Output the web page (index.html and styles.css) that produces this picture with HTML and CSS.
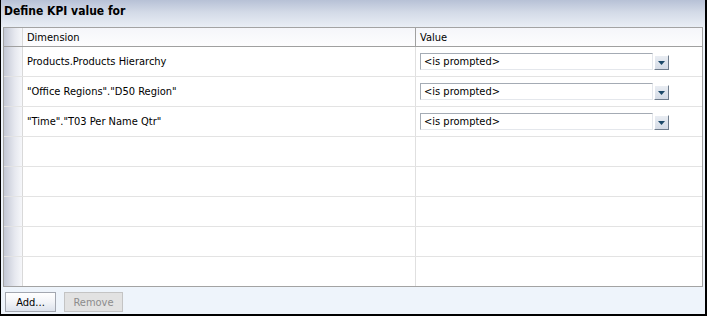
FILE: index.html
```html
<!DOCTYPE html>
<html lang="en">
<head>
    <meta charset="UTF-8">
    <title>Define KPI value for</title>
    <link rel="stylesheet" href="styles.css">
</head>
<body>
    <div class="dialog">
        <div class="title">Define KPI value for</div>

        <div class="grid">
            <div class="row head">
                <div class="rowhead"></div>
                <div class="cell dim">Dimension</div>
                <div class="cell val">Value</div>
            </div>

            <div class="row">
                <div class="rowhead"></div>
                <div class="cell dim">Products.Products Hierarchy</div>
                <div class="cell val">
                    <div class="select">
                        <span class="field">&lt;is prompted&gt;</span>
                        <span class="drop"><svg width="7" height="4" viewBox="0 0 7 4"><path d="M0 0H7L3.5 4Z" fill="#1b4868"/></svg></span>
                    </div>
                </div>
            </div>

            <div class="row">
                <div class="rowhead"></div>
                <div class="cell dim">"Office Regions"."D50 Region"</div>
                <div class="cell val">
                    <div class="select">
                        <span class="field">&lt;is prompted&gt;</span>
                        <span class="drop"><svg width="7" height="4" viewBox="0 0 7 4"><path d="M0 0H7L3.5 4Z" fill="#1b4868"/></svg></span>
                    </div>
                </div>
            </div>

            <div class="row">
                <div class="rowhead"></div>
                <div class="cell dim">"Time"."T03 Per Name Qtr"</div>
                <div class="cell val">
                    <div class="select">
                        <span class="field">&lt;is prompted&gt;</span>
                        <span class="drop"><svg width="7" height="4" viewBox="0 0 7 4"><path d="M0 0H7L3.5 4Z" fill="#1b4868"/></svg></span>
                    </div>
                </div>
            </div>

            <div class="row"><div class="rowhead"></div><div class="cell dim"></div><div class="cell val"></div></div>
            <div class="row"><div class="rowhead"></div><div class="cell dim"></div><div class="cell val"></div></div>
            <div class="row"><div class="rowhead"></div><div class="cell dim"></div><div class="cell val"></div></div>
            <div class="row"><div class="rowhead"></div><div class="cell dim"></div><div class="cell val"></div></div>
            <div class="row last"><div class="rowhead"></div><div class="cell dim"></div><div class="cell val"></div></div>
        </div>

        <div class="actions">
            <button class="btn add">Add...</button>
            <button class="btn remove" disabled>Remove</button>
        </div>
    </div>
</body>
</html>
```

FILE: styles.css
```css
/* Página */
body {
    margin: 0;
    font-family: "DejaVu Sans Condensed", "Liberation Sans", sans-serif;
    font-size: 11px;
    color: #000;
    background-color: #fff;
}

/* Marco del diálogo */
.dialog {
    width: 707px;
    height: 316px;
    box-sizing: border-box;
    border-left: 1px solid #000;
    border-right: 2px solid #000;
    border-bottom: 2px solid #000;
    background-color: #eef4fb;
    display: flex;
    flex-direction: column;
}

/* Barra de título */
.title {
    height: 27px;
    box-sizing: border-box;
    padding: 3px 0 0 3px;
    line-height: 16px;
    font-size: 12px;
    font-weight: bold;
    background: linear-gradient(to bottom, #b7c1d6, #d3dae7 45%, #e9eef5);
}

/* Tabla */
.grid {
    margin: 0 2px 0 2px;
    border: 1px solid #a3a3a3;
    background-color: #fff;
}

.row {
    display: grid;
    grid-template-columns: 19px 393px 1fr;
    height: 30px;
    border-bottom: 1px solid #e3e3e3;
    box-sizing: border-box;
}

.row.last {
    border-bottom: none;
    height: 29px;
}

.row.head {
    height: 19px;
    border-bottom: 1px solid #a0a0a0;
    background: linear-gradient(to bottom, #f5f6fa, #fdfdfe);
}

.rowhead {
    border-right: 1px solid #d9d9d9;
    background: linear-gradient(to right, #c3c8d5, #e6e8ef 60%, #f6f7fa);
}

.cell {
    display: flex;
    align-items: center;
    padding-left: 4px;
    white-space: nowrap;
    overflow: hidden;
}

.cell.dim {
    border-right: 1px solid #e0e0e0;
}

.row.head .cell.dim {
    border-right-color: #a0a0a0;
}

/* Lista desplegable */
.select {
    display: flex;
    align-items: flex-end;
}

.field {
    width: 233px;
    height: 17px;
    box-sizing: border-box;
    padding-left: 3px;
    line-height: 15px;
    border: 1px solid #a4abb4;
    border-right-color: #e4e7ec;
    border-bottom-color: #e4e7ec;
    background-color: #fff;
}

.drop {
    width: 15px;
    height: 15px;
    box-sizing: border-box;
    margin-left: 1px;
    display: flex;
    align-items: center;
    justify-content: center;
    padding-top: 1px;
    border: 1px solid #fff;
    border-right-color: #6f7c8c;
    border-bottom-color: #6f7c8c;
    background: linear-gradient(to bottom, #e9edf3, #d4dbe6);
}

/* Botones inferiores */
.actions {
    display: flex;
    gap: 8px;
    padding: 5px 0 0 4px;
}

.btn {
    height: 20px;
    box-sizing: border-box;
    font-family: inherit;
    font-size: 11px;
    padding: 0;
}

.btn.add {
    width: 51px;
    color: #000;
    border: 1px solid #a3a7b0;
    background: linear-gradient(to bottom, #ffffff, #f2f4f8 50%, #dce2ec);
}

.btn.remove {
    width: 59px;
    color: #8c8c8c;
    border: 1px solid #c4c4c4;
    background-color: #e2e2e2;
}
```
